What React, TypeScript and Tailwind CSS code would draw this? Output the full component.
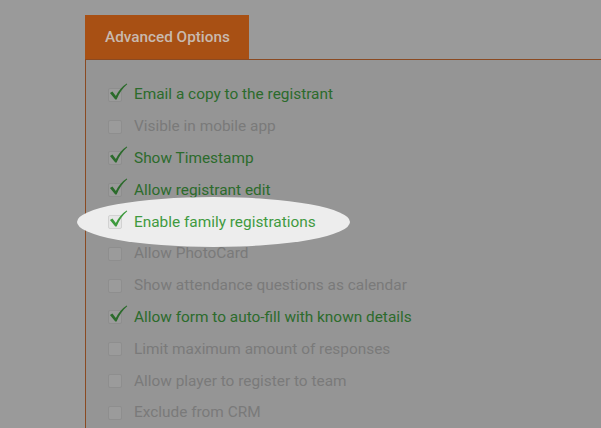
const options = [
  { label: 'Email a copy to the registrant', checked: true },
  { label: 'Visible in mobile app', checked: false },
  { label: 'Show Timestamp', checked: true },
  { label: 'Allow registrant edit', checked: true },
  { label: 'Enable family registrations', checked: true, spotlight: true },
  { label: 'Allow PhotoCard', checked: false },
  { label: 'Show attendance questions as calendar', checked: false },
  { label: 'Allow form to auto-fill with known details', checked: true },
  { label: 'Limit maximum amount of responses', checked: false },
  { label: 'Allow player to register to team', checked: false },
  { label: 'Exclude from CRM', checked: false },
]

function Tick({ bright }: { bright?: boolean }) {
  return (
    <svg
      viewBox="0 0 20 20"
      className="absolute left-[1px] top-[-5px] w-[19px] h-[19px]"
      fill={bright ? '#3d9a3d' : '#2b6b2b'}
    >
      <path d="M1 10.5 L3.6 9 L7.2 13.6 C10 8.5 13.5 4 18.6 0.6 L19.2 1.4 C14.5 5.5 11 10.5 8 17.4 L6.6 17.4 Z" />
    </svg>
  )
}

export default function App() {
  return (
    <div
      className="w-[601px] h-[428px] overflow-hidden bg-[#9a9a9a] pt-[15px] pl-[85px]"
      style={{ fontFamily: 'Roboto, "Liberation Sans", sans-serif' }}
    >
      <div className="w-[164px] h-[44px] bg-[#a85014] flex items-center pl-[20px] text-[15.3px] font-medium text-[#c8b9ae]">
        Advanced Options
      </div>
      <div className="relative border-t border-l border-[#8a4a22] bg-[#959595] h-[400px] pt-[19px] pl-[22px]">
        {options.map((o) => (
          <div key={o.label} className="relative h-[31.8px] flex items-center gap-[12px]">
            {o.spotlight && (
              <div className="absolute left-[-31px] top-[-9px] w-[273px] h-[50px] rounded-[50%] bg-[#ededed]" />
            )}
            <div className="relative w-[14px] h-[14px]">
              <div
                className={
                  o.spotlight
                    ? 'w-[14px] h-[14px] rounded-[2px] bg-[#e6e6e6] border border-[#d2d2d2]'
                    : 'w-[14px] h-[14px] rounded-[2px] bg-[#9b9b9b] border border-[#8e8e8e]'
                }
              />
              {o.checked && <Tick bright={o.spotlight} />}
            </div>
            <span
              className={
                'relative text-[15.4px] ' +
                (o.spotlight ? 'text-[#3f9a3f]' : o.checked ? 'text-[#2c6b2c]' : 'text-[#7a7a7a]')
              }
            >
              {o.label}
            </span>
          </div>
        ))}
      </div>
    </div>
  )
}
